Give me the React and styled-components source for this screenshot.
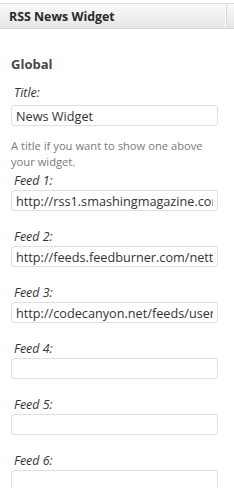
import styled, { createGlobalStyle } from "styled-components";

const GlobalStyle = createGlobalStyle`
  html, body {
    margin: 0;
    padding: 0;
    background: #fff;
  }
  body {
    font-family: "Open Sans", "DejaVu Sans", sans-serif;
    color: #333;
  }
`;

const feeds = [
  "http://rss1.smashingmagazine.com/feed/",
  "http://feeds.feedburner.com/nettuts",
  "http://codecanyon.net/feeds/users/",
  "",
  "",
  "",
];

const App = () => {
  return (
    <>
      <GlobalStyle />
      <Widget>
        <Header>
          <HeaderTitle>RSS News Widget</HeaderTitle>
          <Toggle />
        </Header>
        <Body>
          <SectionTitle>Global</SectionTitle>
          <Field $gap={5}>
            <Label>Title:</Label>
            <Input defaultValue="News Widget" />
          </Field>
          <Help>A title if you want to show one above your widget.</Help>
          {feeds.map((url, i) => (
            <Field key={i} $gap={2} $spaced={i > 0}>
              <Label>Feed {i + 1}:</Label>
              <Input defaultValue={url} />
            </Field>
          ))}
        </Body>
      </Widget>
    </>
  );
};

const Widget = styled.div`
  width: 234px;
  height: 488px;
  overflow: hidden;
  padding-top: 3px;
  box-sizing: border-box;
`;

const Header = styled.div`
  display: flex;
  align-items: stretch;
  height: 26px;
  background: linear-gradient(to bottom, #f9f9f9, #e6e6e6);
  border-top: 1px solid #dcdcdc;
  border-bottom: 1px solid #d4d4d4;
  box-sizing: border-box;
`;

const HeaderTitle = styled.div`
  flex: 1;
  display: flex;
  align-items: center;
  padding-left: 9px;
  font-size: 12.4px;
  font-weight: bold;
  color: #2a2a2a;
  border-right: 1px solid #d8d8d8;
  box-shadow: inset -1px 0 0 #fff;
`;

const Toggle = styled.div`
  width: 7px;
  background: linear-gradient(to bottom, #f9f9f9, #e6e6e6);
`;

const Body = styled.div`
  padding: 27px 16px 0 11px;
`;

const SectionTitle = styled.h3`
  margin: 0 0 13px;
  font-size: 13px;
  line-height: 16px;
  font-weight: bold;
  color: #464646;
`;

const Field = styled.div`
  display: flex;
  flex-direction: column;
  gap: ${({ $gap }) => $gap}px;
  margin-top: ${({ $spaced }) => ($spaced ? "18px" : "0")};
`;

const Label = styled.label`
  padding-left: 3px;
  font-size: 12.4px;
  font-style: italic;
  color: #333;
  line-height: 15px;
`;

const Input = styled.input`
  box-sizing: border-box;
  width: 207px;
  height: 21px;
  padding: 0 4px;
  border: 1px solid #dfdfdf;
  border-radius: 3px;
  background: #fff;
  font-family: "Open Sans", "DejaVu Sans", sans-serif;
  font-size: 12.7px;
  color: #333;
  outline: none;
`;

const Help = styled.p`
  margin: 12px 0 3px;
  font-size: 11.2px;
  line-height: 16px;
  color: #7a7a7a;
`;

export default App;
